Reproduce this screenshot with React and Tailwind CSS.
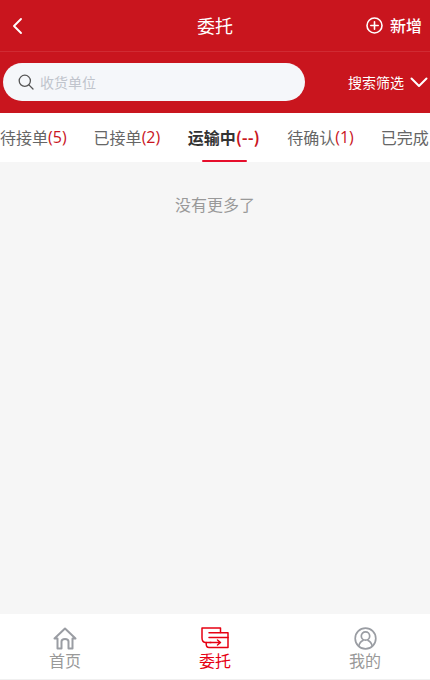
import React from "react";

function Tab({ label, count, active }) {
  return (
    <div className={`relative shrink-0 h-full flex items-center text-[16px] pb-[1px] whitespace-nowrap ${active ? "px-[14px] font-bold text-[#333]" : "px-[13.5px] text-[#666]"}`}>
      <span>{label}</span>
      <span className={`text-[#c9151e] ${active ? "" : "font-['Open_Sans',sans-serif]"}`}>({count})</span>
      {active && <div className="absolute bottom-0 left-[28px] w-[45px] h-[2px] rounded-sm bg-[#e60e2b]" />}
    </div>
  );
}

export default function App() {
  return (
    <div className="w-[430px] h-[680px] flex flex-col bg-[#f6f6f6] overflow-hidden font-['Noto_Sans_CJK_SC','Liberation_Sans',sans-serif]">
      <header className="relative h-[52px] shrink-0 flex items-center justify-between bg-[#c9151e] border-b border-[#d02b33] pl-[12px] pr-[8px]">
        <svg width="11" height="18" viewBox="0 0 11 18" fill="none" stroke="#fff" strokeWidth="1.9" strokeLinecap="round" strokeLinejoin="round">
          <path d="M9 2 L2 9 L9 16" />
        </svg>
        <div className="absolute left-0 right-0 text-center text-[18px] text-white pointer-events-none">委托</div>
        <div className="flex items-center gap-[7px] text-white text-[16px] font-medium">
          <svg width="17" height="17" viewBox="0 0 17 17" fill="none" stroke="#fff" strokeWidth="1.6" strokeLinecap="round">
            <circle cx="8.5" cy="8.5" r="7.5" />
            <path d="M8.5 4.8 V12.2 M4.8 8.5 H12.2" />
          </svg>
          <span className="-mt-[2px]">新增</span>
        </div>
      </header>

      <div className="h-[61px] shrink-0 flex items-center justify-between bg-[#c9151e] pl-[3px] pr-[2px] pb-[1px]">
        <div className="w-[302px] h-[38px] rounded-[19px] bg-[#f5f7fa] flex items-center pl-[15px] gap-[6px]">
          <svg width="16" height="16" viewBox="0 0 16 16" fill="none" stroke="#555" strokeWidth="1.3" strokeLinecap="round">
            <circle cx="6.8" cy="6.8" r="5.6" />
            <path d="M10.9 10.9 L15 15" />
          </svg>
          <span className="text-[14px] text-[#c0c4cc]">收货单位</span>
        </div>
        <div className="flex items-center gap-[6px] text-white text-[14px]">
          <span className="mt-[1px]">搜索筛选</span>
          <svg width="18" height="11" viewBox="0 0 18 11" fill="none" stroke="#fff" strokeWidth="2" strokeLinecap="round" strokeLinejoin="round">
            <path d="M1.5 1.5 L9 9 L16.5 1.5" />
          </svg>
        </div>
      </div>

      <nav className="h-[49px] shrink-0 bg-white flex overflow-hidden -ml-[13.5px]">
        <Tab label="待接单" count="5" />
        <Tab label="已接单" count="2" />
        <Tab label="运输中" count="--" active />
        <Tab label="待确认" count="1" />
        <div className="shrink-0 h-full flex items-center pl-[13.5px] pb-[1px] text-[16px] text-[#666] whitespace-nowrap">已完成</div>
      </nav>

      <main className="flex-1 min-h-0 text-center pt-[31px] text-[16px] leading-[22px] text-[#999]">没有更多了</main>

      <footer className="h-[66px] shrink-0 bg-white border-b border-[#f0f0f0] flex justify-center text-[16px] leading-[20px] text-[#999]">
        <div className="w-[150px] shrink-0 flex flex-col items-center pt-[13px]">
          <svg width="24" height="23" viewBox="0 0 24 23" fill="none" stroke="#9a9da3" strokeWidth="2" strokeLinejoin="round" strokeLinecap="round">
            <path d="M1.5 11.5 L12 1.5 L22.5 11.5 H19.5 V21.5 H15.5 V14.5 Q15.5 12 12 12 Q8.5 12 8.5 14.5 V21.5 H4.5 V11.5 Z" />
          </svg>
          <span>首页</span>
        </div>
        <div className="w-[150px] shrink-0 flex flex-col items-center pt-[13px] text-[#e60012]">
          <svg width="28" height="22" viewBox="0 0 28 22" fill="none" stroke="#e60012" strokeWidth="1.5" strokeLinejoin="round" strokeLinecap="round">
            <path d="M10 15.5 H5 Q1 15.5 1 11 V1 H19.5 V5.5" />
            <path d="M8 5.8 H27 V20.5 H8 Q5.2 20.5 5.2 17 V15.5" />
            <path d="M8 10.5 H27" />
            <path d="M9 15.5 H19 M16.5 13 L19.5 15.5 L16.5 18" />
          </svg>
          <span className="mt-[1px]">委托</span>
        </div>
        <div className="w-[150px] shrink-0 flex flex-col items-center pt-[13px]">
          <svg width="23" height="23" viewBox="0 0 23 23" fill="none" stroke="#9a9da3" strokeWidth="1.7" strokeLinecap="round">
            <circle cx="11.5" cy="11.5" r="10.3" />
            <circle cx="11.5" cy="9" r="4.2" />
            <path d="M4.8 19 Q6 14.5 9 13.5 M18.2 19 Q17 14.5 14 13.5" />
          </svg>
          <span>我的</span>
        </div>
      </footer>
    </div>
  );
}
